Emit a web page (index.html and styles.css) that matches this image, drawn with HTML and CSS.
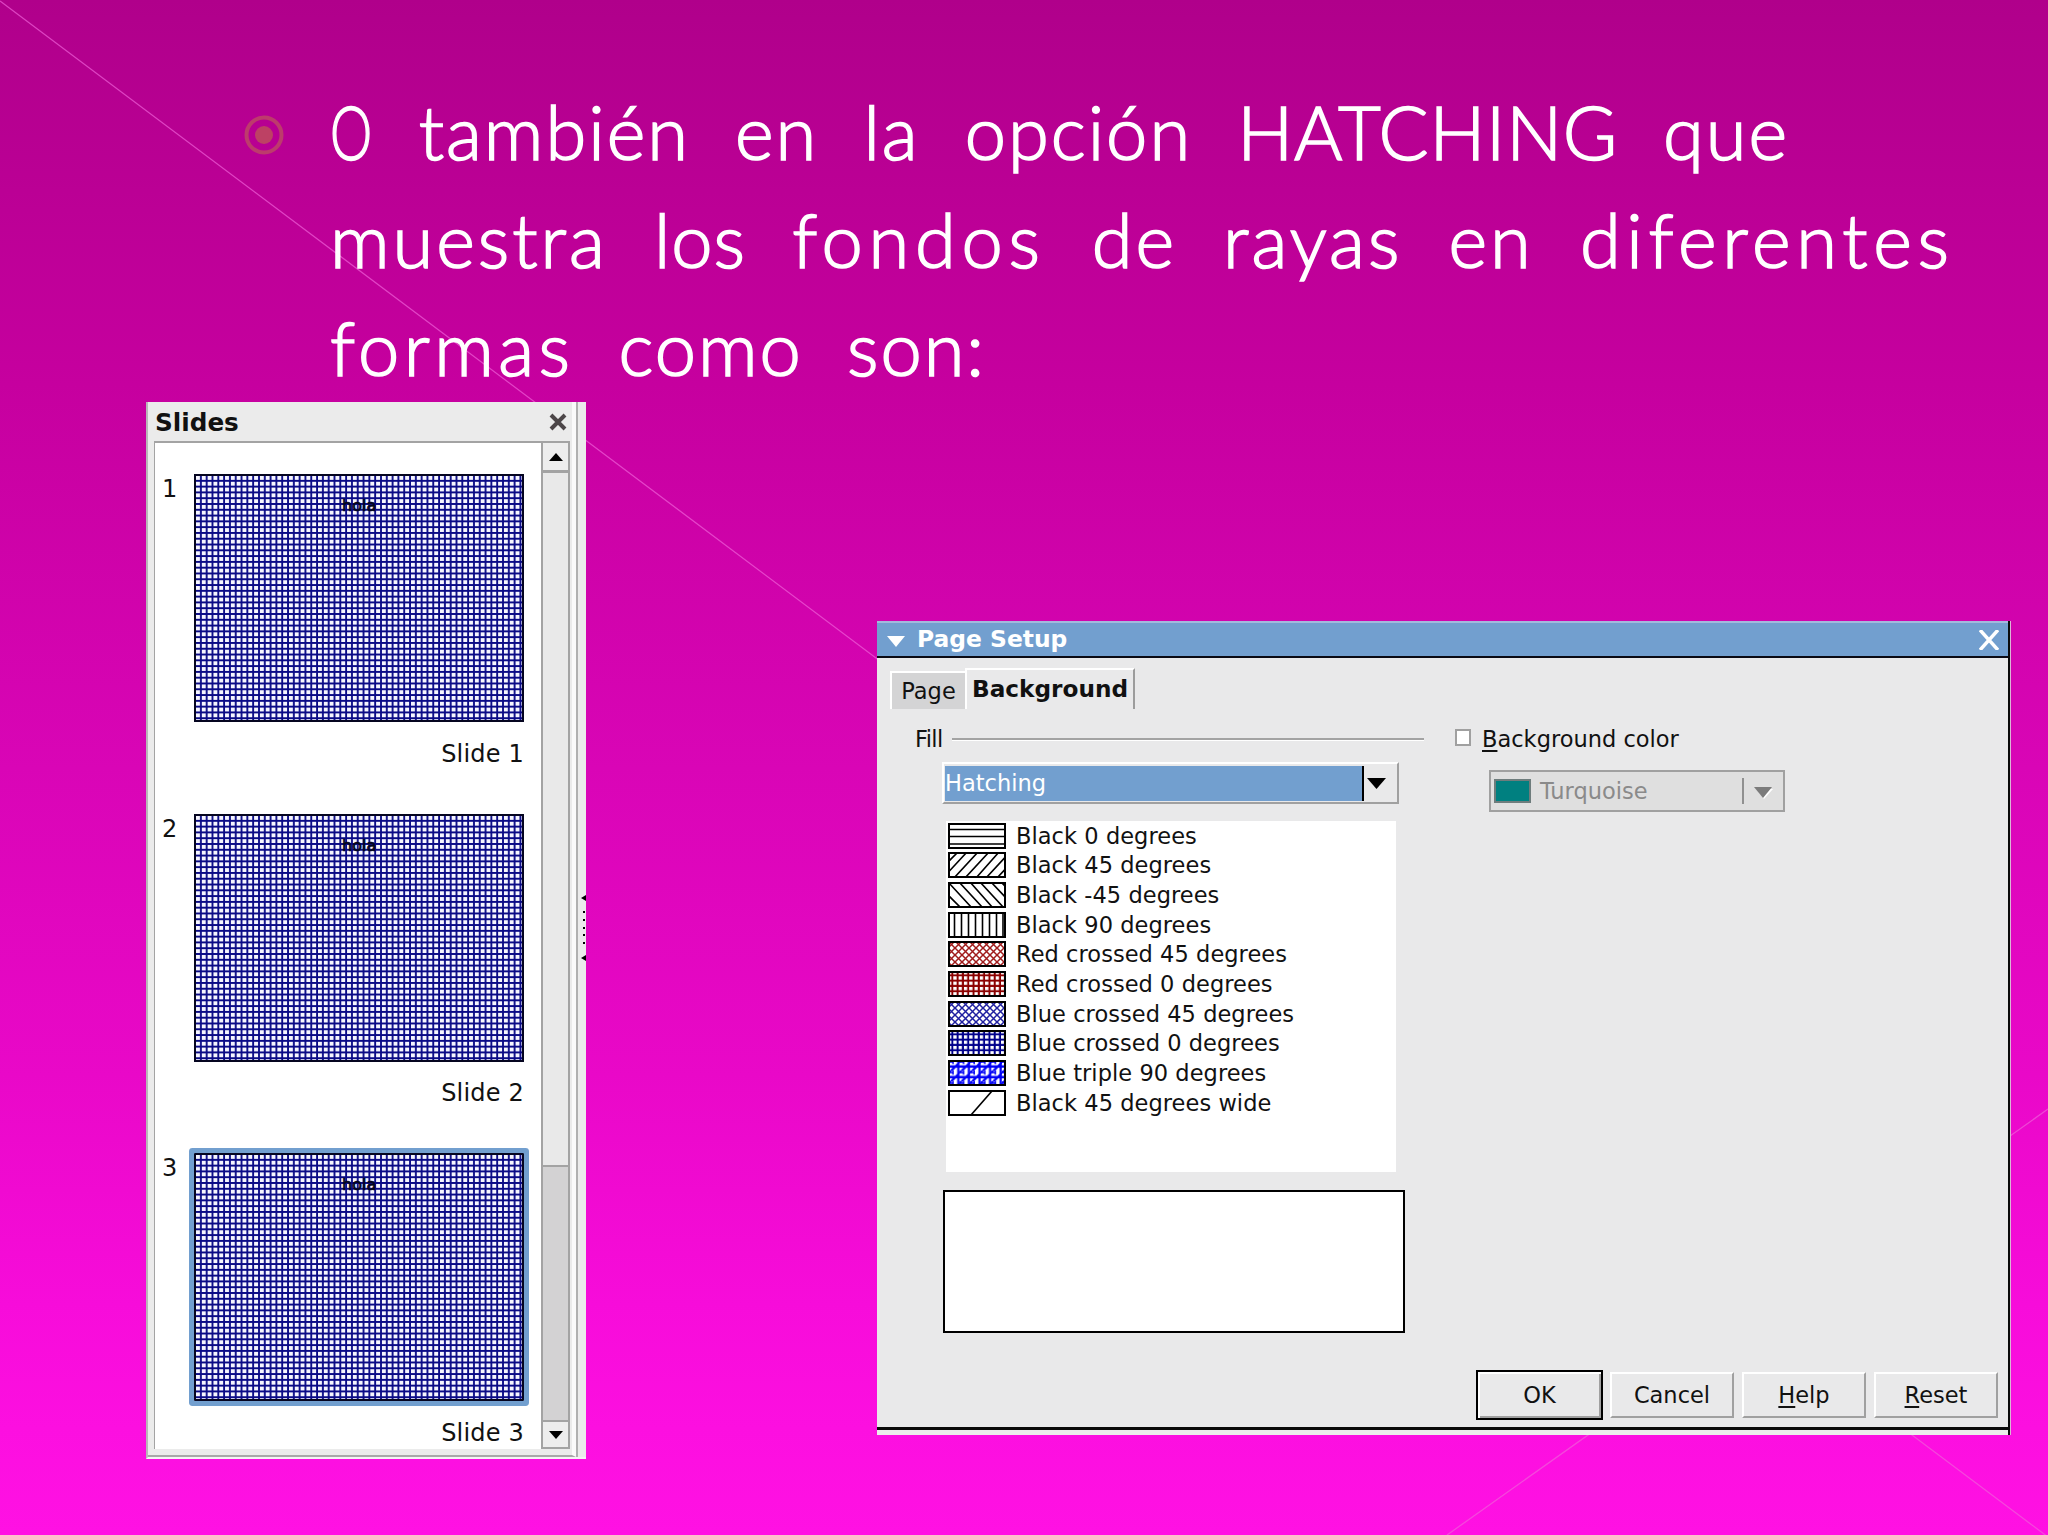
FILE: index.html
```
<!doctype html>
<html lang="es">

<head>
<meta charset="utf-8">
<meta name="viewport" content="width=device-width, initial-scale=1.0">
<title>Hatching</title>
<link rel="stylesheet" href="styles.css">
</head>

<body>
<div class="slide">
	<!-- thin decoration lines behind everything -->
	<svg class="lines" width="2048" height="1535" viewBox="0 0 2048 1535">
		<path d="M0 1L2048 1537M1447 1535L2048 1109"/>
	</svg>

	<div class="headline">
		<svg class="bullet" width="40" height="40" viewBox="0 0 40 40">
			<circle cx="20" cy="20" r="17.5" fill="none" stroke="#bd3b6c" stroke-width="4"/>
			<circle cx="20" cy="20" r="9" fill="#bd4164"/>
		</svg>
		<div class="headtext">
			<div class="line line1"><span class="narrow">O</span> también en la opción <span class="caps">HATCHING</span> que</div>
			<div class="line line2">muestra <span class="tight">los</span> <span class="wide">fondos</span> de rayas en <span class="wide">diferentes</span></div>
			<div class="line line3"><span class="mid">formas</span> como son:</div>
		</div>
	</div>

	<!-- slides panel -->
	<div class="panel">
		<div class="panelmain">
			<div class="panelhead">
				<b>Slides</b>
				<svg width="18" height="18" viewBox="0 0 18 18"><path d="M2 2L16 16M16 2L2 16" stroke="#4c4648" stroke-width="4"/></svg>
			</div>
			<div class="panelbody">
				<div class="thumbs">
					<div class="thumb">
						<span class="num">1</span>
						<div class="page"><svg width="326" height="244"><rect width="326" height="244" fill="url(#grid)"/></svg><span class="hola">hola</span></div>
						<span class="name">Slide 1</span>
					</div>
					<div class="thumb">
						<span class="num">2</span>
						<div class="page"><svg width="326" height="244"><rect width="326" height="244" fill="url(#grid)"/></svg><span class="hola">hola</span></div>
						<span class="name">Slide 2</span>
					</div>
					<div class="thumb">
						<span class="num">3</span>
						<div class="page selected"><svg width="326" height="244"><rect width="326" height="244" fill="url(#grid)"/></svg><span class="hola">hola</span></div>
						<span class="name">Slide 3</span>
					</div>
				</div>
				<div class="scroll">
					<div class="scrollbtn"><svg width="14" height="8"><path d="M0 8L7 0L14 8Z"/></svg></div>
					<div class="trough"></div>
					<div class="grip"></div>
					<div class="scrollbtn down"><svg width="14" height="8"><path d="M0 0L7 8L14 0Z"/></svg></div>
				</div>
			</div>
		</div>
		<div class="splitter">
			<svg width="5" height="66" viewBox="0 0 5 66"><path d="M5 0V6L0 3ZM5 60V66L0 63ZM2 16h2v2h-2zM2 24h2v2h-2zM2 32h2v2h-2zM2 39h2v2h-2zM2 47h2v2h-2z"/></svg>
		</div>
	</div>

	<!-- page setup dialog -->
	<div class="dialog">
		<div class="titlebar">
			<svg width="18" height="11"><path d="M0 0H18L9 11Z" fill="#fff"/></svg>
			<b>Page Setup</b>
			<svg class="close" width="20" height="20" viewBox="0 0 20 20"><path d="M1 0L19 20M19 0L1 20" stroke="#fff" stroke-width="3.5"/></svg>
		</div>
		<div class="tabs">
			<div class="tab">Page</div>
			<div class="tab active">Background</div>
		</div>
		<div class="cols">
			<div class="fill">
				<div class="legend"><span>Fill</span><hr></div>
				<div class="combo">
					<div class="value">Hatching</div>
					<svg width="19" height="11"><path d="M0 0H19L9.500 11Z"/></svg>
				</div>
				<div class="list">
					<div class="item"><svg class="sw" viewBox="2 2 54 22"><path d="M0 6.500H58M0 13.500H58M0 21H58"/></svg>Black 0 degrees</div>
					<div class="item"><svg class="sw" viewBox="2 2 54 22"><path d="M-3 13L10 0M-5 26L19 0M6 26L30 0M17 26L41 0M28 26L51 0M38 26L62 0M49 26L64 10"/></svg>Black 45 degrees</div>
					<div class="item"><svg class="sw" viewBox="2 2 54 22"><path d="M-8 5L13 26M0 0L24 26M11 0L35 26M22 0L45 26M32 0L56 26M43 0L60 18M53 0L60 7"/></svg>Black -45 degrees</div>
					<div class="item"><svg class="sw" viewBox="2 2 54 22"><path d="M6.500 0V26M13.500 0V26M20.500 0V26M27.500 0V26M34.500 0V26M41.500 0V26M48.500 0V26M55 0V26"/></svg>Black 90 degrees</div>
					<div class="item"><svg class="sw" viewBox="2 2 54 22"><rect width="58" height="26" fill="url(#red45)"/></svg>Red crossed 45 degrees</div>
					<div class="item"><svg class="sw" viewBox="2 2 54 22"><rect width="58" height="26" fill="url(#red0)"/></svg>Red crossed 0 degrees</div>
					<div class="item"><svg class="sw" viewBox="2 2 54 22"><rect width="58" height="26" fill="url(#blue45)"/></svg>Blue crossed 45 degrees</div>
					<div class="item"><svg class="sw" viewBox="2 2 54 22"><rect width="58" height="26" fill="url(#blue0)"/></svg>Blue crossed 0 degrees</div>
					<div class="item"><svg class="sw" viewBox="2 2 54 22"><rect width="58" height="26" fill="url(#triple)"/></svg>Blue triple 90 degrees</div>
					<div class="item"><svg class="sw" viewBox="2 2 54 22"><path d="M23 25L44 1"/></svg>Black 45 degrees wide</div>
				</div>
				<div class="preview"></div>
			</div>
			<div class="bgcolor">
				<div class="check"><i></i><span><u>B</u>ackground color</span></div>
				<div class="colorbox">
					<i></i><span>Turquoise</span>
					<svg width="19" height="12"><path d="M2 2H19L10 12Z" fill="#fff"/><path d="M0 0H18L9 11Z" fill="#7b7b7b"/></svg>
				</div>
			</div>
		</div>
		<div class="buttons">
			<div class="btn ok">OK</div>
			<div class="btn">Cancel</div>
			<div class="btn"><u>H</u>elp</div>
			<div class="btn"><u>R</u>eset</div>
		</div>
		<div class="bottomedge"></div>
	</div>
</div>

<!-- hatch patterns -->
<svg class="defs" width="0" height="0">
	<defs>
		<pattern id="grid" width="5.810" height="5.790" patternUnits="userSpaceOnUse"><rect width="6" height="6" fill="#f6f6ff"/><path d="M4.900 0V6M0 4.900H6" stroke="#0a0a86" stroke-width="1.900"/></pattern>
		<pattern id="red45" width="7" height="7" patternUnits="userSpaceOnUse"><path d="M0 0L7 7M7 0L0 7" stroke="#a01c1c" stroke-width="1.500"/></pattern>
		<pattern id="blue45" width="7" height="7" patternUnits="userSpaceOnUse"><path d="M0 0L7 7M7 0L0 7" stroke="#2020a0" stroke-width="1.500"/></pattern>
		<pattern id="red0" width="5.300" height="5.300" patternUnits="userSpaceOnUse"><path d="M4.300 0V6M0 4.300H6" stroke="#8b0000" stroke-width="2"/></pattern>
		<pattern id="blue0" width="5.300" height="5.300" patternUnits="userSpaceOnUse"><path d="M4.300 0V6M0 4.300H6" stroke="#00008b" stroke-width="2"/></pattern>
		<pattern id="triple" x="1" width="10.600" height="10.600" patternUnits="userSpaceOnUse"><path d="M9.300 0V11M0 6.500H11M2 11L11 2M0 2L2 0" stroke="#0000f5" stroke-width="2.200"/><path d="M4 0V4M0 2H4" stroke="#0000f5" stroke-width="1.500"/></pattern>
	</defs>
</svg>
</body>
</html>
```
FILE: styles.css
```
body, html {
	margin: 0;
}

.slide {
	position: relative;
	width: 2048px;
	height: 1535px;
	overflow: hidden;
	background: linear-gradient(#b0008b, #c6009f 25%, #d905b6 50%, #e908c8 70%, #f70cda 85%, #fc0fe0 93%, #ff11e3);
	font-family: "DejaVu Sans", sans-serif;
	font-size: 22.5px;
	color: #111;
}
.lines {
	position: absolute;
	left: 0;
	top: 0;
	fill: none;
	stroke: #f060d8;
	stroke-opacity: .7;
	stroke-width: 1.3;
}
.defs {
	position: absolute;
}
svg {
	display: block;
	flex: none;
}

/* headline */
.headline {
	position: relative;
	display: flex;
	padding: 78px 0 0 244px;
}
.bullet {
	margin-top: 37px;
}
.headtext {
	margin-left: 46px;
	font-family: Lato, "Open Sans", sans-serif;
	font-weight: 300;
	font-size: 74px;
	line-height: 108px;
	color: #fff;
	-webkit-text-stroke: 1.6px #fff;
	white-space: nowrap;
}
.line1 {
	letter-spacing: 2px;
	word-spacing: 23px;
}
.line2 {
	letter-spacing: 3px;
	word-spacing: 23px;
}
.line3 {
	letter-spacing: 2px;
	word-spacing: 22px;
}
.narrow {
	display: inline-block;
	margin-right: -17px;
	transform: scaleX(.72);
	transform-origin: left;
}
.caps {
	letter-spacing: .8px;
}
.tight {
	letter-spacing: 1px;
}
.mid {
	letter-spacing: 4.4px;
}
.wide {
	letter-spacing: 5.7px;
}

/* slides panel */
.panel {
	position: absolute;
	left: 146px;
	top: 402px;
	width: 440px;
	height: 1057px;
	display: flex;
	box-sizing: border-box;
	border-left: 2px solid #b8b8b8;
	border-bottom: 2px solid #f4f4f4;
	background: #ebebeb;
	font-size: 24px;
}
.panelmain {
	width: 428px;
	box-sizing: border-box;
	border-right: 4px solid #fafafa;
	border-bottom: 2px solid #a8a8a8;
	padding-left: 6px;
}
.panelhead {
	display: flex;
	justify-content: space-between;
	align-items: center;
	height: 39px;
	padding: 0 5px 0 1px;
}
.panelhead b {
	padding-top: 2px;
	font-size: 24.7px;
}
.panelbody {
	display: flex;
	width: 416px;
	height: 1008px;
	box-sizing: border-box;
	border-top: 2px solid #a3a3a3;
	border-left: 1px solid #a3a3a3;
	background: #fff;
}
.thumbs {
	width: 386px;
	padding-top: 31px;
}
.thumb {
	display: grid;
	grid-template-columns: 39px 330px;
	height: 339.500px;
}
.num {
	height: 30px;
	line-height: 30px;
	padding-left: 7px;
}
.page {
	position: relative;
	width: 326px;
	height: 244px;
	border: 2px solid #050520;
}
.selected {
	box-shadow: 0 0 0 5px #729fcf;
	border-radius: 1px;
}
.hola {
	position: absolute;
	left: 146px;
	top: 20px;
	font-size: 16px;
	line-height: 20px;
	color: #05051c;
	-webkit-text-stroke: .7px #05051c;
}
.name {
	grid-column: 2;
	text-align: right;
	height: 30px;
	line-height: 30px;
	margin-top: -60px;
	align-self: end;
	transform: translateY(-45px);
	letter-spacing: .2px;
}
.scroll {
	display: flex;
	flex-direction: column;
	width: 29px;
	box-sizing: border-box;
	border: solid #a3a3a3;
	border-width: 0 2px;
	background: #e9e9e9;
}
.scrollbtn {
	display: flex;
	align-items: center;
	justify-content: center;
	height: 27px;
	background: #ededed;
	border: solid #a3a3a3;
	border-width: 0 0 3px;
}
.scrollbtn.down {
	height: 25px;
	border-width: 2px 0;
}
.trough {
	height: 692px;
}
.grip {
	flex: 1;
	border-top: 2px solid #a3a3a3;
	background: #d3d2d3;
}
.splitter {
	flex: 1;
	border-left: 2px solid #b0b0b0;
	display: flex;
	justify-content: flex-end;
	padding-top: 493px;
}

/* dialog */
.dialog {
	position: absolute;
	left: 877px;
	top: 621px;
	width: 1134px;
	height: 814px;
	box-sizing: border-box;
	display: flex;
	flex-direction: column;
	background: #e9e9ea;
	border-right: 1px solid #dcb4d8;
	box-shadow: inset -2px 0 0 #0a0a0a;
}
.titlebar {
	display: flex;
	align-items: center;
	height: 33px;
	margin-right: 2px;
	padding: 0 9px 0 10px;
	background: #729fcf;
	border-top: 2px solid #a3b9dc;
	border-bottom: 2px solid #0a0a14;
	color: #fff;
	font-size: 23.4px;
}
.titlebar b {
	margin-left: 12px;
	position: relative;
	top: -1px;
}
.titlebar svg {
	margin-top: 4px;
}
.titlebar .close {
	margin: 0 0 0 auto;
}
.tabs {
	display: flex;
	align-items: flex-end;
	height: 51px;
	padding-left: 13px;
}
.tab {
	width: 73px;
	height: 36px;
	line-height: 36px;
	text-align: center;
	border: solid #fff;
	border-width: 2px 0 0 2px;
	background: #d4d4d5;
}
.tab.active {
	width: 166px;
	height: 39px;
	line-height: 38px;
	border-right: 2px solid #9c9c9c;
	background: #e9e9ea;
	font-weight: bold;
	font-size: 23.2px;
}
.cols {
	display: flex;
	flex: 1;
}
.fill {
	width: 509px;
	padding: 15px 0 0 38px;
}
.legend {
	display: flex;
	align-items: center;
	height: 30px;
}
.legend span {
	width: 37px;
	letter-spacing: -.6px;
}
.legend hr {
	flex: 1;
	margin: 0;
	border: 0;
	height: 2px;
	background: #a3a3a3;
	border-bottom: 1px solid #fff;
}
.combo {
	display: flex;
	align-items: center;
	width: 453px;
	height: 38px;
	margin: 8px 0 0 27px;
	border: 2px solid #fff;
	border-right-color: #a0a0a0;
	border-bottom-color: #a0a0a0;
}
.value {
	width: 417px;
	height: 35px;
	margin: 0 3px 0 1px;
	line-height: 35px;
	background: #729fcf;
	border-right: 2px solid #000;
	color: #fff;
}
.list {
	margin: 17px 0 0 31px;
	width: 450px;
	height: 350px;
	padding-top: 1px;
	background: #fff;
}
.item {
	display: flex;
	align-items: center;
	height: 29.670px;
	padding-left: 2px;
	line-height: 26px;
	position: relative;
	top: -1px;
	letter-spacing: .05px;
}
.sw {
	width: 54px;
	height: 22px;
	border: 2px solid #000;
	margin-right: 10px;
	fill: none;
	stroke: #000;
	stroke-width: 1.6;
}
.sw rect {
	stroke: none;
}
.preview {
	width: 458px;
	height: 139px;
	margin: 18px 0 0 28px;
	border: 2px solid #000;
	background: #fff;
}
.bgcolor {
	padding: 14px 0 0 31px;
}
.check {
	display: flex;
	height: 30px;
	line-height: 32px;
}
.check i {
	width: 12px;
	height: 13px;
	margin: 6px 11px 0 0;
	border: 2px solid #a0a0a0;
	background: #fff;
}
u {
	text-underline-offset: 3px;
	text-decoration-thickness: 2px;
}
.colorbox {
	display: flex;
	align-items: center;
	width: 292px;
	height: 38px;
	margin: 17px 0 0 34px;
	border: 2px solid #a0a0a0;
	background: #dfdfdf;
	color: #8a8a8a;
}
.colorbox i {
	width: 33px;
	height: 20px;
	margin: 0 9px 0 3px;
	border: 2px solid #6e7c7c;
	background: #008080;
}
.colorbox span {
	width: 202px;
	line-height: 26px;
	border-right: 2px solid #909090;
}
.colorbox svg {
	margin: 3px 0 0 10px;
}
.buttons {
	display: flex;
	justify-content: flex-end;
	align-items: center;
	height: 50px;
	padding-right: 12px;
	gap: 8px;
}
.btn {
	width: 120px;
	height: 42px;
	line-height: 43px;
	text-align: center;
	border: 2px solid #fff;
	border-right-color: #a0a0a0;
	border-bottom-color: #a0a0a0;
}
.btn.ok {
	width: 123px;
	height: 46px;
	line-height: 46px;
	border-color: #000;
	margin-right: -1px;
	box-shadow: inset 1px 1px 0 1px #fff, inset -1px -1px 0 1px #a0a0a0;
}
.bottomedge {
	height: 5px;
	margin: 7px 2px 0 0;
	border-top: 3px solid #0a0a0a;
	background: #ececec;
}
```
